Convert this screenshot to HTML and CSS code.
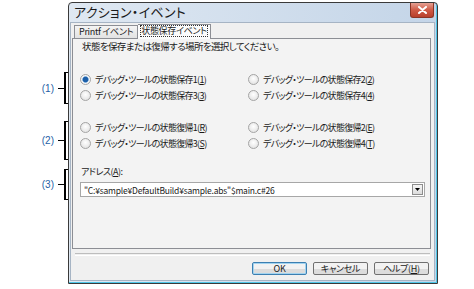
FILE: index.html
```html
<!DOCTYPE html>
<html lang="ja">

<head>
    <meta charset="UTF-8">
    <title>アクション・イベント</title>
    <link rel="stylesheet" href="styles.css">
</head>

<body>
    <div class="page">
        <!-- Callout brackets -->
        <div class="notes">
            <div class="note note-1"><span class="note-label">(1)</span><span class="note-tick"></span><span class="note-brace"></span></div>
            <div class="note note-2"><span class="note-label">(2)</span><span class="note-tick"></span><span class="note-brace"></span></div>
            <div class="note note-3"><span class="note-label">(3)</span><span class="note-tick"></span><span class="note-brace"></span></div>
        </div>

        <!-- Dialog window -->
        <div class="dialog">
            <div class="titlebar">
                <span class="title">アクション・イベント</span>
                <span class="close">
                    <svg width="11" height="8" viewBox="0 0 11 8">
                        <path d="M2 1 L9 7 M9 1 L2 7" stroke="#fff" stroke-width="2" stroke-linecap="round"/>
                    </svg>
                </span>
            </div>

            <div class="client">
                <div class="tabs">
                    <div class="tab">Printf イベント</div>
                    <div class="tab active"><span class="focus">状態保存イベント</span></div>
                </div>

                <div class="panel">
                    <p class="hint">状態を保存または復帰する場所を選択してください。</p>

                    <div class="radio-grid group-save">
                        <label class="radio"><span class="dot checked"></span>デバッグ・ツールの状態保存1(<u>1</u>)</label>
                        <label class="radio"><span class="dot"></span>デバッグ・ツールの状態保存2(<u>2</u>)</label>
                        <label class="radio"><span class="dot"></span>デバッグ・ツールの状態保存3(<u>3</u>)</label>
                        <label class="radio"><span class="dot"></span>デバッグ・ツールの状態保存4(<u>4</u>)</label>
                    </div>

                    <div class="radio-grid group-load">
                        <label class="radio"><span class="dot"></span>デバッグ・ツールの状態復帰1(<u>R</u>)</label>
                        <label class="radio"><span class="dot"></span>デバッグ・ツールの状態復帰2(<u>E</u>)</label>
                        <label class="radio"><span class="dot"></span>デバッグ・ツールの状態復帰3(<u>S</u>)</label>
                        <label class="radio"><span class="dot"></span>デバッグ・ツールの状態復帰4(<u>T</u>)</label>
                    </div>

                    <div class="address">
                        <div class="address-label">アドレス(<u>A</u>):</div>
                        <div class="combo">
                            <span class="combo-text">"C:¥sample¥DefaultBuild¥sample.abs"$main.c#26</span>
                            <span class="combo-btn">
                                <svg width="5" height="3" viewBox="0 0 5 3"><path d="M0 0 H5 L2.5 3 Z" fill="#000"/></svg>
                            </span>
                        </div>
                    </div>
                </div>

                <div class="separator"></div>

                <div class="buttons">
                    <button class="btn default">OK</button>
                    <button class="btn">キャンセル</button>
                    <button class="btn">ヘルプ(<u>H</u>)</button>
                </div>
            </div>
        </div>
    </div>
</body>

</html>
```

FILE: styles.css
```css
/* Page and callouts */
body {
    margin: 0;
    background: #fff;
    font-family: "Noto Sans CJK JP", "Noto Sans", sans-serif;
    font-feature-settings: "palt";
    color: #1a1a1a;
}

.page {
    display: flex;
    width: 474px;
    height: 289px;
}

.notes {
    width: 68px;
    padding-top: 72px;
    display: flex;
    flex-direction: column;
}

.note {
    display: flex;
    align-items: center;
    justify-content: flex-end;
}

.note-1 {
    height: 32px;
}

.note-2 {
    height: 39px;
    margin-top: 17px;
}

.note-3 {
    height: 31px;
    margin-top: 9px;
}

.note-label {
    font-family: "Liberation Sans", sans-serif;
    font-size: 10px;
    color: #1f5fa6;
    margin-right: 4px;
}

.note-tick {
    width: 6px;
    height: 1px;
    background: #000;
}

.note-brace {
    width: 4px;
    height: 100%;
    box-sizing: border-box;
    border: 1px solid #000;
    border-left-width: 2px;
    border-right: none;
}

/* Dialog frame */
.dialog {
    width: 370px;
    height: 282px;
    margin-top: 2px;
    box-sizing: border-box;
    border: 1px solid #3a3a3a;
    border-radius: 4px 4px 0 0;
    background: linear-gradient(to right, #dfe8f2, #c4d5e8);
    padding: 0 2px 2px 1px;
    display: flex;
    flex-direction: column;
    box-shadow: inset -1px -1px 0 #4fc6e8;
}

.titlebar {
    height: 19px;
    display: flex;
    align-items: flex-start;
    justify-content: space-between;
    padding-left: 4px;
}

.title {
    font-size: 13px;
    line-height: 18px;
    letter-spacing: 0.3px;
}

.close {
    width: 24px;
    height: 15px;
    margin: 0 1px 0 0;
    box-sizing: border-box;
    border: 1px solid #8a3526;
    border-top: none;
    border-radius: 0 0 3px 3px;
    background: linear-gradient(#e6a193, #cf5a45 50%, #b8402c);
    display: flex;
    align-items: center;
    justify-content: center;
}

.client {
    flex: 1;
    background: #f0f0f0;
    border: 1px solid #a6b4c4;
    padding: 1px 2px 0 1px;
    display: flex;
    flex-direction: column;
    font-size: 9px;
}

/* Tabs */
.tabs {
    display: flex;
    padding-left: 2px;
    height: 14px;
    align-items: flex-end;
}

.tab {
    height: 12px;
    padding: 0 4px;
    border: 1px solid #8c8e94;
    border-bottom: none;
    background: linear-gradient(#f4f4f4, #e2e2e2);
    font-size: 9px;
    letter-spacing: -0.3px;
    line-height: 12px;
    white-space: nowrap;
}

.tab.active {
    height: 14px;
    background: #fcfcfc;
    border-left: none;
    padding: 0 3px;
    position: relative;
    top: 1px;
}

.focus {
    display: inline-block;
    line-height: 10px;
    margin-top: 1px;
    outline: 1px dotted #333;
}

.panel {
    height: 211px;
    box-sizing: border-box;
    border: 1px solid #8c8e94;
    background: #f3f3f3;
    padding: 0 7px;
    margin-right: 1px;
}

.hint {
    margin: 1px 0 0 2px;
    font-size: 9.5px;
    letter-spacing: -0.6px;
    line-height: 13px;
}

/* Radios */
.radio-grid {
    display: grid;
    grid-template-columns: 168px 1fr;
    grid-auto-rows: 16px;
    letter-spacing: -0.7px;
}

.group-save {
    margin-top: 18px;
}

.group-load {
    margin-top: 16px;
}

.radio {
    display: flex;
    align-items: center;
    white-space: nowrap;
}

.dot {
    width: 9px;
    height: 9px;
    margin-right: 4px;
    border-radius: 50%;
    border: 1px solid #a4a4a4;
    background: radial-gradient(circle at 50% 40%, #fff, #dcdcdc);
    flex-shrink: 0;
}

.dot.checked {
    background: radial-gradient(circle, #1d5fa8 0 2.5px, #7fb0e0 3px, #f6f6f6 3.6px);
}

u {
    text-decoration: underline;
}

/* Address combo */
.address {
    margin-top: 14px;
}

.address-label {
    line-height: 13px;
    margin-left: 1px;
    letter-spacing: -0.5px;
}

.combo {
    margin-top: 4px;
    width: 345px;
    height: 15px;
    box-sizing: border-box;
    border: 1px solid #a7a7a7;
    background: #fff;
    display: flex;
    align-items: center;
    justify-content: space-between;
    padding-left: 3px;
}

.combo-text {
    font-size: 8.5px;
    letter-spacing: -0.2px;
}

.combo-btn {
    width: 11px;
    height: 11px;
    margin-right: 1px;
    box-sizing: border-box;
    border: 1px solid #8d8d8d;
    background: linear-gradient(#f5f5f5, #dcdcdc);
    display: flex;
    align-items: center;
    justify-content: center;
}

/* Footer */
.separator {
    margin: 4px 2px 0 3px;
    height: 1px;
    border-top: 1px solid #bdbdbd;
    border-bottom: 1px solid #fff;
}

.buttons {
    display: flex;
    justify-content: flex-end;
    gap: 6px;
    padding: 6px 3px 0 0;
}

.btn {
    width: 55px;
    height: 13px;
    padding: 0;
    font-family: inherit;
    font-feature-settings: "palt";
    font-size: 9px;
    letter-spacing: -0.3px;
    line-height: 11px;
    border: 1px solid #707070;
    border-radius: 2px;
    background: linear-gradient(#f2f2f2 50%, #dcdcdc 50%);
    color: #1a1a1a;
}

.btn.default {
    border-color: #3c7fb1;
    box-shadow: inset 0 0 0 1px #a3d4f0;
}
```
